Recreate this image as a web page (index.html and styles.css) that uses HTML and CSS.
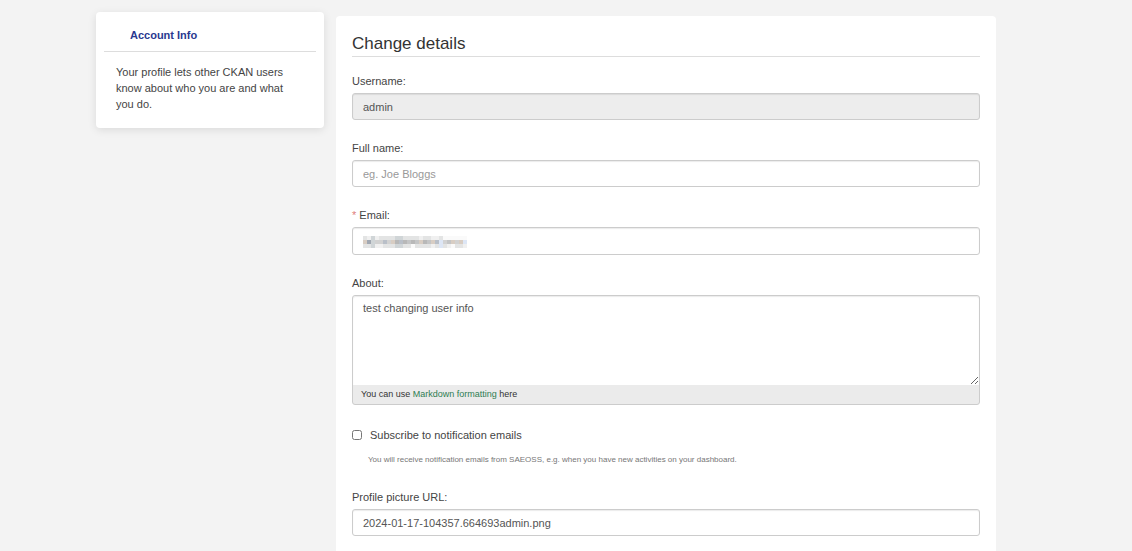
FILE: index.html
```html
<!DOCTYPE html>
<html lang="en">
<head>
<meta charset="utf-8">
<title>Change details</title>
<link rel="stylesheet" href="styles.css">
</head>
<body>
<div class="page">
  <aside class="sidebar">
    <h2 class="sidebar-title">Account Info</h2>
    <p class="sidebar-text">Your profile lets other CKAN users know about who you are and what you do.</p>
  </aside>
  <main class="panel">
    <h1 class="panel-title">Change details</h1>
    <form class="form">
      <div class="field">
        <label for="username">Username:</label>
        <input class="control" id="username" type="text" value="admin" disabled>
      </div>
      <div class="field">
        <label for="fullname">Full name:</label>
        <input class="control" id="fullname" type="text" placeholder="eg. Joe Bloggs">
      </div>
      <div class="field">
        <label for="email"><span class="required">*</span> Email:</label>
        <div class="masked">
          <input class="control control-email" id="email" type="email">
          <svg class="mosaic" viewBox="0 0 26 3" preserveAspectRatio="none" shape-rendering="crispEdges" aria-hidden="true">
            <path fill="#f0f0f0" d="M0 0h26v3H0z"/>
            <path fill="#e3e4e4" d="M0 0h1v1H0zM4 0h4v1H4zM10 0h4v1h-4zM15 0h2v1h-2zM19 0h1v1h-1zM0 2h3v1H0zM5 2h3v1H5zM10 2h2v1h-2zM13 2h4v1h-4zM18 2h3v1h-3zM23 2h2v1h-2z"/>
            <path fill="#d0d5d7" d="M2 0h1v3H2zM8 0h2v1H8zM8 2h2v1H8z"/>
            <path fill="#d2d2d2" d="M3 1h22v1H3z"/>
            <path fill="#d8cdc3" d="M0 1h1v1H0zM7 1h1v1H7zM14 1h1v1h-1zM17 1h1v1h-1zM22 1h1v1h-1zM24 1h1v1h-1z"/>
            <path fill="#a1a8b2" d="M1 1h1v1H1z"/>
            <path fill="#b9bfc8" d="M5 1h1v1H5zM9 1h1v1H9zM18 1h1v1h-1z"/>
            <path fill="#b8b8b8" d="M8 1h1v1H8zM10 1h1v1h-1zM12 1h1v1h-1zM15 1h1v1h-1z"/>
            <path fill="#c4c5c6" d="M11 1h1v1h-1zM13 1h1v1h-1zM16 1h1v1h-1zM21 1h1v1h-1z"/>
            <path fill="#dde6f5" d="M19 1h1v2h-1zM25 1h1v1h-1z"/>
            <path fill="#fafafa" d="M20 0h6v1h-6zM12 2h1v1h-1zM22 2h1v1h-1z"/>
          </svg>
        </div>
      </div>
      <div class="field">
        <label for="about">About:</label>
        <div class="editor">
          <textarea class="editor-text" id="about">test changing user info</textarea>
          <div class="editor-info">You can use <a href="#markdown">Markdown formatting</a> here</div>
        </div>
      </div>
      <div class="subscribe">
        <input class="tick" id="notify" type="checkbox" aria-describedby="notify-help">
        <label for="notify">Subscribe to notification emails</label>
        <p class="help" id="notify-help">You will receive notification emails from SAEOSS, e.g. when you have new activities on your dashboard.</p>
      </div>
      <div class="field">
        <label for="picture">Profile picture URL:</label>
        <input class="control" id="picture" type="text" value="2024-01-17-104357.664693admin.png">
      </div>
    </form>
  </main>
</div>
</body>
</html>
```
FILE: styles.css
```css
* {
  box-sizing: border-box;
}

body {
  margin: 0;
  background: #f3f3f3;
  color: #444;
  font: 11px/16px "Liberation Sans", Arial, sans-serif;
}

.page {
  display: grid;
  grid-template-columns: 228px minmax(0, 660px);
  gap: 12px;
  min-height: 100vh;
  padding: 0 16px 0 96px;
}

.sidebar {
  align-self: start;
  margin-top: 12px;
  padding: 8px 8px 16px;
  background: #fff;
  border-radius: 4px;
  box-shadow: 0 2px 8px rgba(0, 0, 0, 0.1);
}

.sidebar-title {
  margin: 0;
  padding: 7px 26px 8px;
  border-bottom: 1px solid #ddd;
  color: #2a3990;
  font-size: 11px;
  line-height: 16px;
}

.sidebar-text {
  margin: 12px 20px 0 12px;
}

.panel {
  margin-top: 16px;
  padding: 16px 16px 0;
  background: #fff;
  border-radius: 4px 4px 0 0;
}

.panel-title {
  margin: 0 0 16px;
  border-bottom: 1px solid #ddd;
  color: #333;
  font-size: 17px;
  font-weight: 400;
  line-height: 24px;
}

.form {
  display: flex;
  flex-direction: column;
  gap: 20px;
}

.field {
  display: flex;
  flex-direction: column;
  gap: 4px;
}

.required {
  color: #e0807c;
}

.control {
  width: 100%;
  height: 27px;
  padding: 0 10px;
  border: 1px solid #ccc;
  border-radius: 3px;
  background: #fff;
  box-shadow: inset 0 1px 1px rgba(0, 0, 0, 0.08);
  color: #555;
  font: inherit;
}

.control:disabled {
  background: #ededed;
}

.control::placeholder {
  color: #999;
}

.masked {
  position: relative;
  display: flex;
}

.control-email {
  height: 28px;
}

.mosaic {
  position: absolute;
  top: 9px;
  left: 11px;
  width: 104px;
  height: 12px;
}

.editor {
  border: 1px solid #ccc;
  border-radius: 3px;
  background: #ebebeb;
}

.editor-text {
  display: block;
  width: 100%;
  height: 89px;
  padding: 4px 10px;
  border: 0;
  border-radius: 3px 3px 0 0;
  background: #fff;
  box-shadow: inset 0 1px 1px rgba(0, 0, 0, 0.08);
  color: #555;
  font: inherit;
  resize: vertical;
}

.editor-info {
  padding: 1px 8px 2px;
  color: #333;
  font-size: 9px;
  line-height: 16px;
}

.editor-info a {
  color: #2f7d52;
  text-decoration: none;
}

.subscribe {
  display: grid;
  grid-template-columns: 10px 1fr;
  column-gap: 8px;
  align-items: center;
  padding: 2px 0;
}

.tick {
  width: 10px;
  height: 10px;
  margin: 0;
}

.help {
  grid-column: 1 / -1;
  margin: 10px 0 0;
  padding-left: 16px;
  color: #777;
  font-size: 8px;
  line-height: 14px;
}
```
